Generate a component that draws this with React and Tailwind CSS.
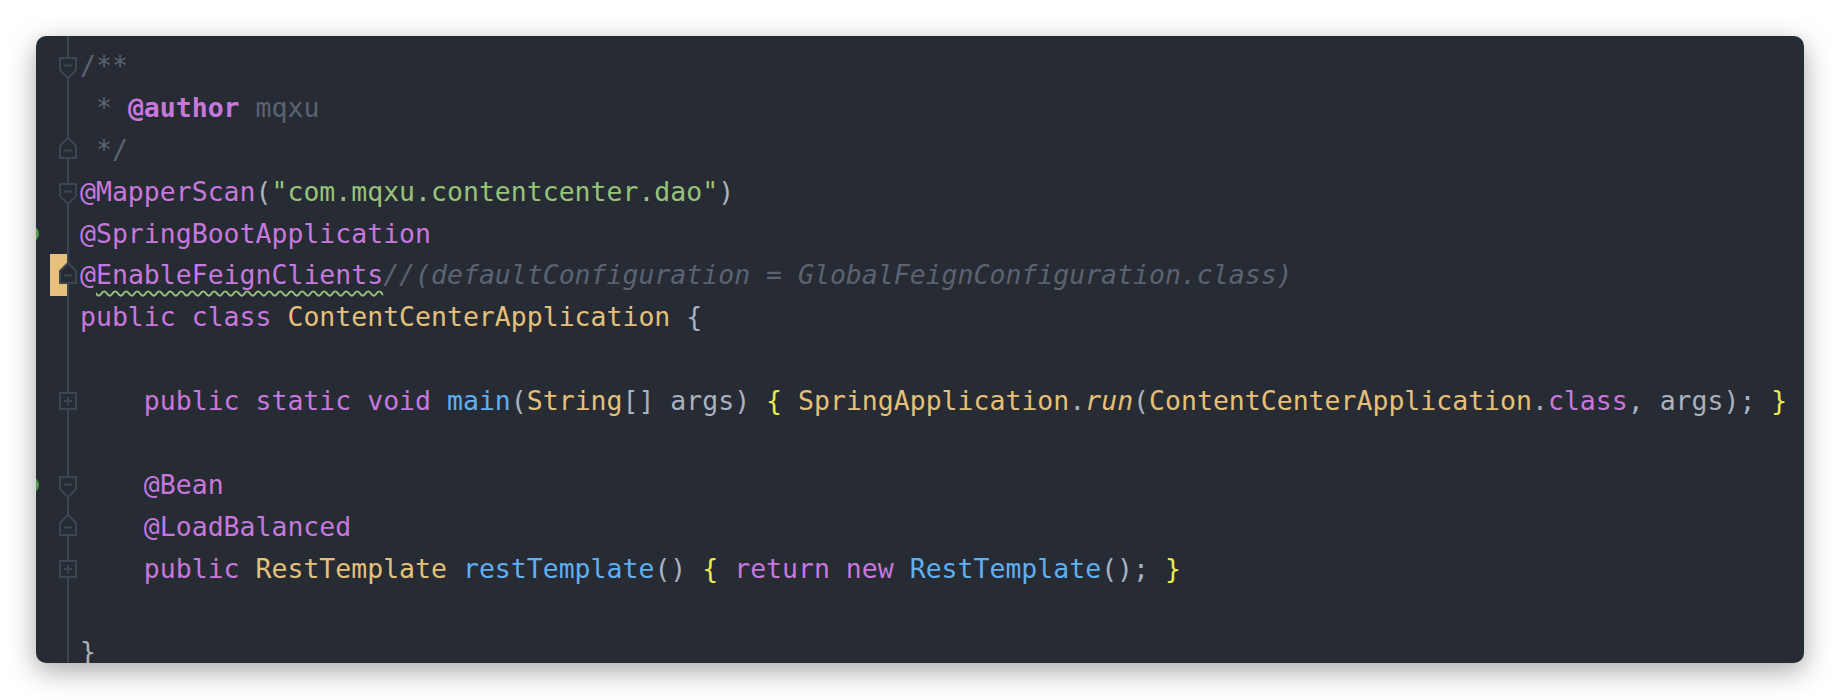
const C = {
  c: 'text-[#5c6370]',
  k: 'text-[#c678dd]',
  s: 'text-[#98c379]',
  t: 'text-[#e5c07b]',
  f: 'text-[#61afef]',
  p: 'text-[#abb2bf]',
  b: 'text-[#ecea4e]',
}

// [colour, text, extra classes]
const lines = [
  { fold: 'start', tokens: [['c', '/**']] },
  { tokens: [['c', ' * '], ['k', '@author', 'font-bold'], ['c', ' mqxu']] },
  { fold: 'end', tokens: [['c', ' */']] },
  { fold: 'start', tokens: [['k', '@MapperScan'], ['p', '('], ['s', '"com.mqxu.contentcenter.dao"'], ['p', ')']] },
  { run: true, tokens: [['k', '@SpringBootApplication']] },
  {
    fold: 'end',
    mark: true,
    tokens: [
      ['k', '@'],
      ['k', 'EnableFeignClients', 'underline decoration-wavy decoration-[#98c379] decoration-[1.5px] underline-offset-[6px]'],
      ['c', '//(defaultConfiguration = GlobalFeignConfiguration.class)', 'italic'],
    ],
  },
  { tokens: [['k', 'public class '], ['t', 'ContentCenterApplication'], ['p', ' {']] },
  { tokens: [] },
  {
    fold: 'plus',
    tokens: [
      ['p', '    '], ['k', 'public static void '], ['f', 'main'], ['p', '('], ['t', 'String'], ['p', '[] args) '],
      ['b', '{ '], ['t', 'SpringApplication'], ['p', '.'], ['t', 'run', 'italic'], ['p', '('],
      ['t', 'ContentCenterApplication'], ['p', '.'], ['k', 'class'], ['p', ', args); '], ['b', '}'],
    ],
  },
  { tokens: [] },
  { fold: 'start', run: true, tokens: [['p', '    '], ['k', '@Bean']] },
  { fold: 'end', tokens: [['p', '    '], ['k', '@LoadBalanced']] },
  {
    fold: 'plus',
    tokens: [
      ['p', '    '], ['k', 'public '], ['t', 'RestTemplate '], ['f', 'restTemplate'], ['p', '() '],
      ['b', '{ '], ['k', 'return new '], ['f', 'RestTemplate'], ['p', '(); '], ['b', '}'],
    ],
  },
  { tokens: [] },
  { tokens: [['p', '}']] },
]

function FoldIcon({ type }) {
  const stroke = '#3c4651'
  if (type === 'start') {
    return (
      <svg className="absolute left-[23px] top-[12px]" width="18" height="22" viewBox="0 0 18 22">
        <path d="M1 1 H17 V13 L9 21 L1 13 Z" fill="#272b34" stroke={stroke} strokeWidth="2" strokeLinejoin="miter" />
        <path d="M5 8.5 H13" stroke={stroke} strokeWidth="2" />
      </svg>
    )
  }
  if (type === 'end') {
    return (
      <svg className="absolute left-[23px] top-[8px]" width="18" height="22" viewBox="0 0 18 22">
        <path d="M9 1 L17 9 V21 H1 V9 Z" fill="#272b34" stroke={stroke} strokeWidth="2" strokeLinejoin="miter" />
        <path d="M5 13.5 H13" stroke={stroke} strokeWidth="2" />
      </svg>
    )
  }
  return (
    <svg className="absolute left-[23px] top-[12px]" width="18" height="18" viewBox="0 0 18 18">
      <rect x="1" y="1" width="16" height="16" fill="#272b34" stroke={stroke} strokeWidth="2" />
      <path d="M5 9 H13 M9 5 V13" stroke={stroke} strokeWidth="2" />
    </svg>
  )
}

function Gutter({ line }) {
  return (
    <div className="relative w-[44px] shrink-0 self-stretch">
      {line?.mark && <div className="absolute left-[14px] top-0 bottom-0 w-[17px] bg-[#e6c17b]" />}
      <div className="absolute left-[31px] top-0 bottom-0 w-[2px] bg-[#3c4651]" />
      {line?.run && <div className="absolute left-[-13px] top-[13px] w-[16px] h-[16px] rounded-full bg-[#4f9a4c]" />}
      {line?.fold && <FoldIcon type={line.fold} />}
    </div>
  )
}

export default function App() {
  return (
    <div className="w-[1840px] h-[700px] bg-white pt-[36px] pl-[36px]">
      <div className="w-[1768px] h-[627px] rounded-[10px] overflow-hidden bg-[#272b34] shadow-[0_8px_28px_rgba(0,0,0,0.35)] font-['DejaVu_Sans_Mono',monospace] text-[26.5px]">
        <div className="flex h-[9px]">
          <Gutter />
        </div>
        {lines.map((line, i) => (
          <div key={i} className="flex h-[41.9px] items-center">
            <Gutter line={line} />
            <div className="whitespace-pre leading-[41.9px]">
              {line.tokens.map(([col, text, extra], j) => (
                <span key={j} className={`${C[col]} ${extra || ''}`}>{text}</span>
              ))}
            </div>
          </div>
        ))}
        <div className="flex h-[40px]">
          <Gutter />
        </div>
      </div>
    </div>
  )
}
